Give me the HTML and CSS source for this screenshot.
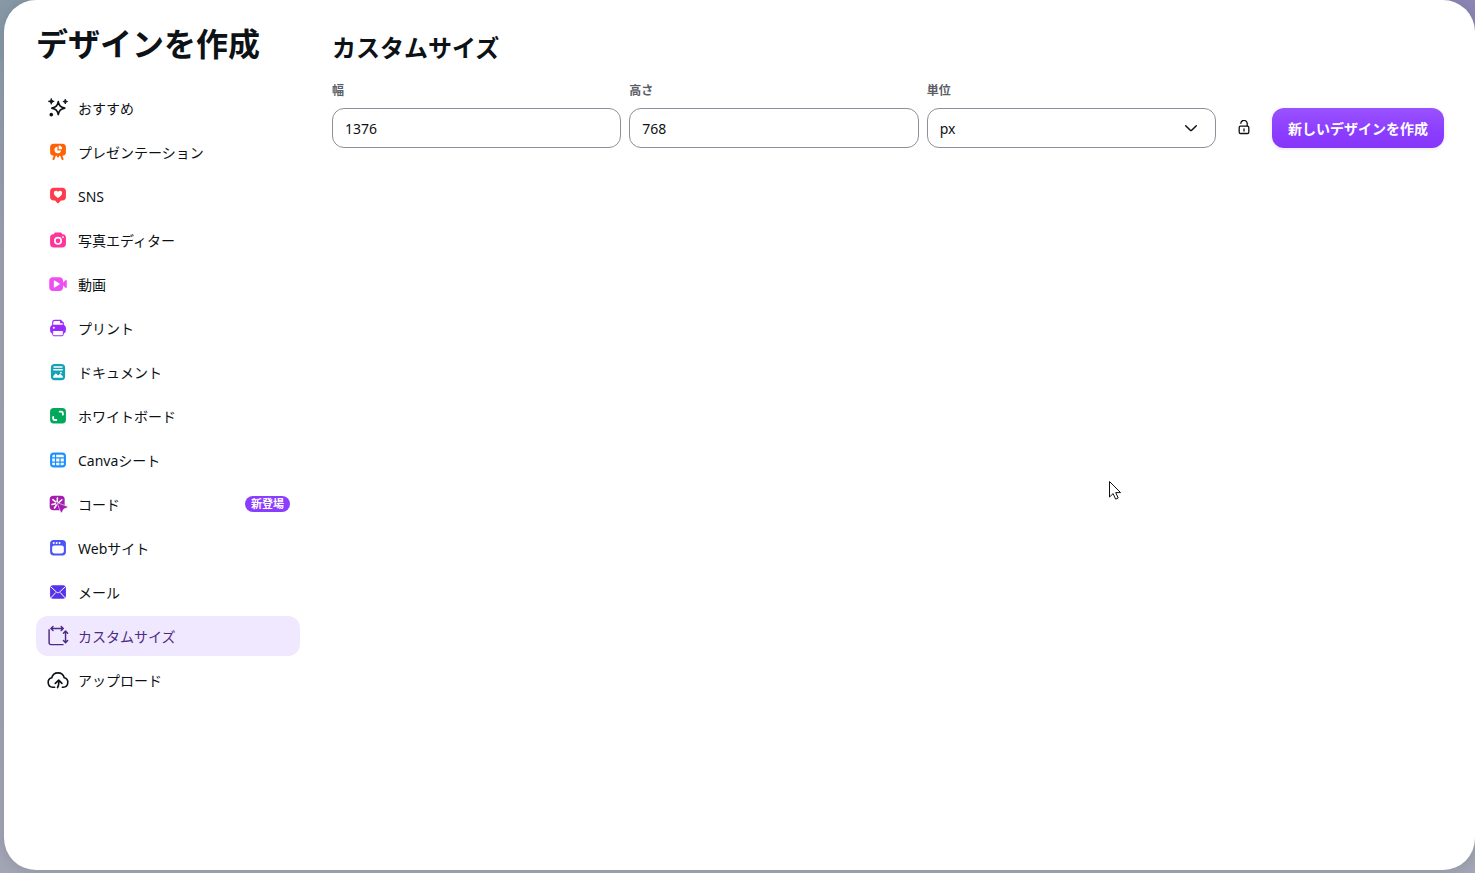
FILE: index.html
```html
<!DOCTYPE html>
<html lang="ja">
<head>
  <meta charset="UTF-8">
  <meta name="viewport" content="width=device-width, initial-scale=1.0">
  <title>デザインを作成</title>
  <link rel="stylesheet" href="styles.css">
</head>
<body>
  <div class="dialog">
    <aside class="sidebar">
      <h1 class="title">デザインを作成</h1>
      <nav class="menu">
        <a class="menu-item" href="#">
          <svg class="icon" viewBox="1 1 22 22" fill="none">
            <path d="M12.300 5c1 4.600 2.500 6.100 7.100 7.100-4.600 1-6.100 2.500-7.100 7.100-1-4.600-2.500-6.100-7.100-7.100 4.600-1 6.100-2.500 7.100-7.100z" stroke="#0d1216" stroke-width="1.800" stroke-linejoin="round"/>
            <path d="M4.600 1.500c.5 2 1.200 2.700 3.200 3.200-2 .5-2.700 1.200-3.200 3.200-.5-2-1.200-2.700-3.200-3.200 2-.5 2.700-1.200 3.200-3.200zM20 2.300c.4 1.700.9 2.200 2.600 2.600-1.700.4-2.200.9-2.600 2.600-.4-1.700-.9-2.200-2.600-2.600 1.700-.4 2.200-.9 2.600-2.600z" fill="#0d1216" stroke="#0d1216"/>
            <circle cx="4.600" cy="19.300" r="2" fill="#0d1216"/>
          </svg>
          <span>おすすめ</span>
        </a>
        <a class="menu-item" href="#">
          <svg class="icon" viewBox="0 0 24 24">
            <rect x="2.500" y="2" width="19" height="14.500" rx="4.500" fill="#ff6105"/>
            <path d="M8.500 15.500l-2 5M15.500 15.500l2 5M12 15.500v2" stroke="#ff6105" stroke-width="2.400" stroke-linecap="round"/>
            <path d="M11.300 5.600a4 4 0 1 0 4.400 4.600h-4.400z" fill="#fff"/>
            <path d="M12.800 4.300v4.400h4.100a4.300 4.300 0 0 0-4.100-4.400z" fill="#fff"/>
          </svg>
          <span>プレゼンテーション</span>
        </a>
        <a class="menu-item" href="#">
          <svg class="icon" viewBox="0 0 24 24">
            <path d="M7 2h10a4.500 4.500 0 0 1 4.500 4.500v6.300a4.500 4.500 0 0 1-4.500 4.500h-1.500l-2.600 3.200a1.200 1.200 0 0 1-1.800 0l-2.600-3.200H7a4.500 4.500 0 0 1-4.500-4.500V6.500A4.500 4.500 0 0 1 7 2z" fill="#ff3b4b"/>
            <path d="M12 14.500C8.700 12.300 7 10.700 7 8.400c0-2.900 3.800-3.500 5-1.100 1.200-2.400 5-1.800 5 1.100 0 2.300-1.700 3.900-5 6.100z" fill="#fff"/>
          </svg>
          <span>SNS</span>
        </a>
        <a class="menu-item" href="#">
          <svg class="icon" viewBox="0 0 24 24">
            <path d="M8.900 3h6.200c1.200 0 1.600 2 2.500 2 2.500 0 3.900 1.500 3.900 4v7.500c0 2.700-1.600 4.500-4.500 4.500H7c-2.900 0-4.500-1.800-4.500-4.500V9c0-2.500 1.400-4 3.900-4 .9 0 1.300-2 2.500-2z" fill="#ff3399"/>
            <circle cx="12" cy="13" r="3.800" fill="none" stroke="#fff" stroke-width="2"/>
            <circle cx="18" cy="8.500" r="1.100" fill="#fff"/>
          </svg>
          <span>写真エディター</span>
        </a>
        <a class="menu-item" href="#">
          <svg class="icon" viewBox="0 0 24 24">
            <rect x="1.500" y="4" width="16.500" height="16.500" rx="4.500" fill="#ed4ff5"/>
            <path d="M17 11l4-3.500c.6-.5 1.500-.2 1.500.6v7.800c0 .8-.9 1.100-1.500.6l-4-3.500z" fill="#ed4ff5"/>
            <path d="M7 8.500v7c0 .6.600.9 1.100.6l5.600-3.500a.7.7 0 0 0 0-1.200L8.100 7.900c-.5-.3-1.100 0-1.100.6z" fill="#fff"/>
          </svg>
          <span>動画</span>
        </a>
        <a class="menu-item" href="#">
          <svg class="icon" viewBox="0 0 24 24">
            <path d="M5.600 8.500V5.300c0-1.500.9-2.500 2.400-2.500h7.200l3.200 3.200v2.500" fill="#fff" stroke="#992bff" stroke-width="1.300"/>
            <path d="M14.500 2.500v3.700h4z" fill="#992bff"/>
            <rect x="2.500" y="8" width="19" height="11" rx="4.500" fill="#992bff"/>
            <rect x="5.600" y="15" width="12.800" height="6.300" rx="1.500" fill="#fff" stroke="#992bff" stroke-width="1.200"/>
            <circle cx="7" cy="11.800" r="1.200" fill="#fff"/>
          </svg>
          <span>プリント</span>
        </a>
        <a class="menu-item" href="#">
          <svg class="icon" viewBox="0 0 24 24">
            <rect x="3.500" y="2.500" width="17" height="19.500" rx="4.500" fill="#13a3b5"/>
            <path d="M7.300 6h9.400M7 9.300h10" stroke="#fff" stroke-width="1.900" stroke-linecap="round"/>
            <path d="M6.300 19v-2.300l3-3.200 2.800 2.800 2.300-2.300 3.300 3V19z" fill="#fff"/>
            <circle cx="15.500" cy="12.800" r="1.100" fill="#fff"/>
          </svg>
          <span>ドキュメント</span>
        </a>
        <a class="menu-item" href="#">
          <svg class="icon" viewBox="0 0 24 24">
            <rect x="2.500" y="2.500" width="19" height="18.500" rx="4.500" fill="#00a85a"/>
            <path d="M14 6.800h2a1.800 1.800 0 0 1 1.800 1.800v1.800M10 16.800H8A1.800 1.800 0 0 1 6.200 15v-1.800" fill="none" stroke="#fff" stroke-width="2.200" stroke-linecap="round"/>
          </svg>
          <span>ホワイトボード</span>
        </a>
        <a class="menu-item" href="#">
          <svg class="icon" viewBox="0 0 24 24">
            <rect x="2.500" y="3" width="19" height="18" rx="4.500" fill="#1a90ff"/>
            <path d="M5.800 5.700h2.500v3H5zM9.800 5.700h8l1.200 1.200v1.800H9.800zM5 10.200h3.300v3.500H5zM9.800 10.200h3.900v3.500H9.800zM15.200 10.200H19v3.500h-3.800zM5 15.300h3.300v3H6l-1-1zM9.800 15.300h3.900v3H9.800zM15.200 15.300H19v2l-1 1h-2.800z" fill="#fff"/>
          </svg>
          <span>Canvaシート</span>
        </a>
        <a class="menu-item" href="#">
          <svg class="icon" viewBox="0 0 24 24">
            <rect x="2" y="2" width="18" height="17.500" rx="4.500" fill="#a21caf"/>
            <path d="M11.300 4.800l-.3 4M5.800 6.800l3.400 2.700M4.800 12.500l4-.8M7.800 16.800l2.200-3.600M16.500 7l-3.700 3.200" stroke="#fff" stroke-width="1.900" stroke-linecap="round"/>
            <path d="M10.800 10.300l12 4.400c.9.300.8 1.500 0 1.800l-4 1.500-2 3.800c-.4.800-1.400.7-1.700-.1z" fill="#a21caf" stroke="#fff" stroke-width=".7"/>
          </svg>
          <span>コード</span>
          <span class="badge">新登場</span>
        </a>
        <a class="menu-item" href="#">
          <svg class="icon" viewBox="0 0 24 24">
            <rect x="2.500" y="2.500" width="19" height="18.500" rx="4.500" fill="#4a53fa"/>
            <rect x="5" y="9" width="14" height="9.500" rx="2.500" fill="#fff"/>
            <path d="M6.800 6h.1M10.300 6h.1M13.800 6h.1" stroke="#fff" stroke-width="2.300" stroke-linecap="round"/>
          </svg>
          <span>Webサイト</span>
        </a>
        <a class="menu-item" href="#">
          <svg class="icon" viewBox="0 0 24 24">
            <rect x="2.500" y="4" width="19" height="16" rx="3.500" fill="#5533eb"/>
            <path d="M3 5.500l7.300 6.700c1 .9 2.400.9 3.400 0L21 5.500M3.500 19l6-6.500M20.500 19l-6-6.500" fill="none" stroke="#fff" stroke-width="1.200"/>
          </svg>
          <span>メール</span>
        </a>
        <a class="menu-item active" href="#" aria-current="page">
          <svg class="icon" viewBox="1 1 22 22" fill="none" stroke="#4c2a85" stroke-width="1.600" stroke-linecap="round" stroke-linejoin="round">
            <path d="M2.200 5v14.500a2 2 0 0 0 2 2H17.500M4.500 3.700h13M6.500 1.500L4.200 3.700l2.300 2.200M15.500 1.500l2.300 2.200-2.300 2.200M20.300 7v12M18 9l2.300-2.400L22.600 9M18 17l2.300 2.400 2.300-2.400"/>
          </svg>
          <span>カスタムサイズ</span>
        </a>
        <a class="menu-item" href="#">
          <svg class="icon" viewBox="1 1 22 22" fill="none" stroke="#0d1216" stroke-width="1.800" stroke-linecap="round" stroke-linejoin="round">
            <path d="M8.300 20H6.200A5.300 5.300 0 0 1 5.100 9.600a7.100 7.100 0 0 1 13.800 0A5.300 5.300 0 0 1 17.800 20h-1M11.500 20.300c1-1.500 1.300-3 1.300-5v-2.800M9 15.700l3.800-3.600 3.500 3.600"/>
          </svg>
          <span>アップロード</span>
        </a>
      </nav>
    </aside>

    <main class="content">
      <h2 class="heading">カスタムサイズ</h2>
      <form class="size-form">
        <div class="field">
          <label for="width">幅</label>
          <input class="control" id="width" type="text" inputmode="numeric" value="1376">
        </div>
        <div class="field">
          <label for="height">高さ</label>
          <input class="control" id="height" type="text" inputmode="numeric" value="768">
        </div>
        <div class="field">
          <label for="unit">単位</label>
          <div class="select-wrap">
            <select class="control" id="unit">
              <option>px</option>
            </select>
            <svg class="chevron" viewBox="0 0 16 16" fill="none" stroke="#0d1216" stroke-width="1.500" stroke-linecap="round" stroke-linejoin="round">
              <path d="M2.700 5.700L7.300 10.200a1 1 0 0 0 1.400 0L13.300 5.700"/>
            </svg>
          </div>
        </div>
        <button class="lock" type="button" aria-label="縦横比をロック">
          <svg viewBox="0 0 16 16" fill="none" stroke="#0d1216" stroke-width="1.300" stroke-linecap="round">
            <rect x="3.200" y="6.200" width="9.600" height="7.300" rx="1.200"/>
            <path d="M4.800 3.300a3.200 3.200 0 0 1 6.400.7v2M8 9v2"/>
          </svg>
        </button>
        <button class="create" type="button">新しいデザインを作成</button>
      </form>
    </main>
  </div>

  <!-- Курсор -->
  <svg class="cursor" viewBox="0 0 14 21">
    <path d="M1.500 1.500v15.500l3.600-3.400 2.500 5.500 2.600-1.100-2.500-5.400h4.900z" fill="#fff" stroke="#111" stroke-width="1"/>
  </svg>
</body>
</html>
```
FILE: styles.css
```css
* {
  box-sizing: border-box;
}

body {
  margin: 0;
  min-height: 100vh;
  display: flex;
  padding: 0 0 3px 4px;
  background: linear-gradient(to right, #8799a6, #8c86b5) top / 100% 60px no-repeat,
    linear-gradient(#8799a6, #9fa2b0 30%, #a2a5b3);
  font-family: "Noto Sans", "Noto Sans CJK JP", sans-serif;
  font-size: 14px;
  color: #0d1216;
}

.dialog {
  flex: 1;
  display: flex;
  gap: 32px;
  padding: 24px 31px 24px 32px;
  background: #fff;
  border-radius: 32px;
  box-shadow: 0 0 12px rgba(60, 64, 90, 0.2);
}

/* Sidebar */
.sidebar {
  flex: 0 0 264px;
}

.title {
  margin: 0 0 24px;
  font-size: 32px;
  line-height: 40px;
  font-weight: 700;
}

.menu {
  display: flex;
  flex-direction: column;
  gap: 4px;
}

.menu-item {
  display: flex;
  align-items: center;
  gap: 10px;
  height: 40px;
  padding: 0 10px 0 12px;
  border-radius: 12px;
  color: inherit;
  text-decoration: none;
}

.menu-item.active {
  background: #f0e8fe;
  color: #4c2a85;
}

.icon {
  width: 20px;
  height: 20px;
  flex: none;
  overflow: visible;
}

.badge {
  margin-left: auto;
  padding: 0 6px;
  border-radius: 8px;
  background: #8b3dff;
  color: #fff;
  font-size: 11px;
  line-height: 16px;
  font-weight: 700;
}

/* Custom size form */
.content {
  flex: 1;
  min-width: 0;
  padding-top: 8px;
}

.heading {
  margin: 0 0 16px;
  font-size: 24px;
  line-height: 32px;
  font-weight: 600;
}

.size-form {
  display: flex;
  align-items: flex-end;
  gap: 8px;
}

.field {
  flex: 1;
  min-width: 0;
}

.field label {
  display: block;
  margin-bottom: 6px;
  font-size: 12px;
  line-height: 22px;
  font-weight: 600;
  color: #5b5e66;
}

.control {
  display: block;
  width: 100%;
  height: 40px;
  padding: 0 12px;
  border: 1px solid #8e9099;
  border-radius: 12px;
  background: #fff;
  color: inherit;
  font: inherit;
  appearance: none;
}

.select-wrap {
  position: relative;
}

.chevron {
  position: absolute;
  top: 12px;
  right: 17px;
  width: 16px;
  height: 16px;
  pointer-events: none;
}

.lock {
  display: flex;
  align-items: center;
  justify-content: center;
  width: 40px;
  height: 40px;
  padding: 0;
  border: none;
  background: none;
}

.lock svg {
  width: 16px;
  height: 16px;
}

.create {
  height: 40px;
  padding: 0 16px;
  border: none;
  border-radius: 12px;
  background: linear-gradient(#9a52ff, #8b3dff 60%, #8636f8);
  box-shadow: 0 1px 4px rgba(64, 87, 109, 0.15);
  color: #fff;
  font: inherit;
  font-weight: 700;
  white-space: nowrap;
}

.menu-item,
button {
  cursor: pointer;
}

.cursor {
  position: absolute;
  top: 480px;
  left: 1108px;
  width: 14px;
  height: 21px;
  pointer-events: none;
}
```
